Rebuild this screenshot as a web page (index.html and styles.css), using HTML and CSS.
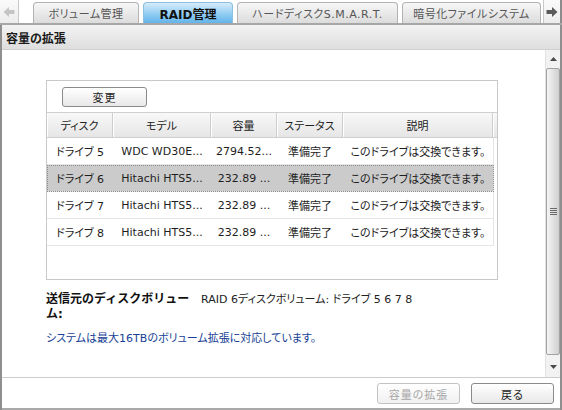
FILE: index.html
```html
<!DOCTYPE html>
<html lang="ja">
<head>
<meta charset="utf-8">
<title>容量の拡張</title>
<link rel="stylesheet" href="styles.css">
</head>
<body>
<div class="app">
  <div class="tabbar">
    <div class="nav nav-left">
      <svg width="12" height="10" viewBox="0 0 12 10"><path d="M0.5 5 L6 0 L6 3 L11.5 3 L11.5 7 L6 7 L6 10 Z" fill="#c4c4c4"/></svg>
    </div>
    <div class="tabs">
      <div class="tab t1">ボリューム管理</div>
      <div class="tab t2 active">RAID管理</div>
      <div class="tab t3">ハードディスクS.M.A.R.T.</div>
      <div class="tab t4">暗号化ファイルシステム</div>
    </div>
    <div class="nav nav-right">
      <svg width="12" height="10" viewBox="0 0 12 10"><path d="M11.5 5 L6 0 L6 3 L0.5 3 L0.5 7 L6 7 L6 10 Z" fill="#5a5a5a"/></svg>
    </div>
  </div>
  <div class="panel">
    <div class="title">容量の拡張</div>
    <div class="body">
      <div class="main">
        <div class="grid">
          <div class="toolbar"><button class="btn btn-change">変更</button></div>
          <div class="ghead">
            <div class="hc c1">ディスク</div>
            <div class="hc c2">モデル</div>
            <div class="hc c3">容量</div>
            <div class="hc c4">ステータス</div>
            <div class="hc c5">説明</div>
            <div class="hc c6"></div>
          </div>
          <div class="row">
            <div class="cell c1">ドライブ 5</div>
            <div class="cell c2">WDC WD30E...</div>
            <div class="cell c3">2794.52...</div>
            <div class="cell c4">準備完了</div>
            <div class="cell c5">このドライブは交換できます。</div>
          </div>
          <div class="row selected">
            <div class="cell c1">ドライブ 6</div>
            <div class="cell c2">Hitachi HTS5...</div>
            <div class="cell c3">232.89 ...</div>
            <div class="cell c4">準備完了</div>
            <div class="cell c5">このドライブは交換できます。</div>
          </div>
          <div class="row">
            <div class="cell c1">ドライブ 7</div>
            <div class="cell c2">Hitachi HTS5...</div>
            <div class="cell c3">232.89 ...</div>
            <div class="cell c4">準備完了</div>
            <div class="cell c5">このドライブは交換できます。</div>
          </div>
          <div class="row">
            <div class="cell c1">ドライブ 8</div>
            <div class="cell c2">Hitachi HTS5...</div>
            <div class="cell c3">232.89 ...</div>
            <div class="cell c4">準備完了</div>
            <div class="cell c5">このドライブは交換できます。</div>
          </div>
        </div>
        <div class="info">
          <div class="label">送信元のディスクボリューム:</div>
          <div class="value">RAID 6ディスクボリューム: ドライブ 5 6 7 8</div>
        </div>
        <div class="note">システムは最大16TBのボリューム拡張に対応しています。</div>
      </div>
      <div class="scrollbar">
        <div class="sb-btn"><svg width="7" height="4" viewBox="0 0 7 4"><path d="M0 4 L3.5 0 L7 4 Z" fill="#4a4a4a"/></svg></div>
        <div class="sb-thumb">
          <svg width="7" height="7" viewBox="0 0 7 7"><path d="M0 0.5 H7 M0 2.5 H7 M0 4.5 H7 M0 6.5 H7" stroke="#6a6a6a" stroke-width="1"/></svg>
        </div>
        <div class="sb-btn sb-down"><svg width="7" height="4" viewBox="0 0 7 4"><path d="M0 0 L3.5 4 L7 0 Z" fill="#4a4a4a"/></svg></div>
      </div>
    </div>
    <div class="footer">
      <button class="btn btn-foot" disabled>容量の拡張</button>
      <button class="btn btn-foot">戻る</button>
    </div>
  </div>
</div>
</body>
</html>
```

FILE: styles.css
```css
* { box-sizing: border-box; }
html, body { margin: 0; padding: 0; background: #ffffff; }
body {
  font-family: "DejaVu Sans", "Noto Sans CJK JP", sans-serif;
  font-size: 11px;
  color: #222;
  font-feature-settings: "palt";
}
.app { width: 562px; height: 410px; display: flex; flex-direction: column; }

.tabbar {
  height: 25px;
  display: flex;
  align-items: flex-end;
  border-bottom: 2px solid #a7a7a7;
  background: #ffffff;
}
.nav {
  height: 23px;
  display: flex;
  align-items: center;
  justify-content: center;
  background: linear-gradient(#fafafa, #ececec);
}
.nav-left { width: 19px; border-right: 1px solid #c8c8c8; }
.nav-right { width: 19px; margin-left: 2px; border-left: 1px solid #c8c8c8; border-right: 2px solid #8c8c8c; }
.tabs { display: flex; gap: 4px; margin-left: 14px; align-items: flex-end; }
.tab {
  height: 21px;
  border: 1px solid #b3b3b3;
  border-bottom: none;
  border-radius: 4px 4px 0 0;
  background: linear-gradient(#f7f7f7, #dcdcdc);
  color: #555;
  display: flex;
  align-items: center;
  justify-content: center;
  white-space: nowrap;
  font-size: 11px;
  letter-spacing: 0.5px;
}
.t1 { width: 106px; }
.t2 { width: 90px; }
.t3 { width: 161px; }
.t4 { width: 139px; }
.tab.active {
  background: linear-gradient(#d6ecfb, #8ccaf2 60%, #63b4ea);
  border-color: #8fbfe0;
  color: #111;
  font-weight: bold;
  font-size: 12px;
  letter-spacing: 0;
}

.panel {
  flex: 1;
  display: flex;
  flex-direction: column;
  border-left: 2px solid #8f8f8f;
  border-right: 2px solid #8f8f8f;
}
.title {
  height: 25px;
  border-bottom: 1px solid #cfcfcf;
  background: linear-gradient(#f3f3f3, #dedede);
  font-weight: bold;
  font-size: 12px;
  color: #1a1a1a;
  padding-left: 4px;
  display: flex;
  align-items: center;
}
.body { height: 327px; display: flex; }
.main { flex: 1; padding: 30px 0 0 44px; }

.grid {
  width: 452px;
  height: 200px;
  border: 1px solid #c9c9c9;
}
.toolbar {
  height: 32px;
  border-bottom: 1px solid #d0d0d0;
  padding: 6px 0 0 15px;
}
.btn {
  font-family: "DejaVu Sans", "Noto Sans CJK JP", sans-serif;
  font-feature-settings: "palt";
  font-size: 11px;
  color: #222;
  background: linear-gradient(#ffffff, #e8e8e8);
  border: 1px solid #8a8a8a;
  border-radius: 3px;
  padding: 0;
  letter-spacing: 1px;
}
.btn-change { width: 85px; height: 20px; }
.ghead {
  display: flex;
  height: 25px;
  border-bottom: 1px solid #d0d0d0;
  background: linear-gradient(#f8f8f8, #e6e6e6);
}
.hc {
  display: flex;
  align-items: center;
  justify-content: center;
  border-right: 1px solid #cdcdcd;
  box-shadow: inset 1px 0 0 #ffffff;
  color: #222;
}
.c1 { width: 66px; }
.c2 { width: 98px; }
.c3 { width: 66px; }
.c4 { width: 66px; }
.c5 { width: 150px; }
.hc.c6 { flex: 1; border-right: none; }
.row {
  display: flex;
  width: 447px;
  height: 27px;
  border-bottom: 1px solid #e6e6e6;
  border-right: 1px solid #e6e6e6;
}
.row.selected {
  background: #cbcbcb;
  outline: 1px dotted #8d8d8d;
  outline-offset: -1px;
}
.cell {
  display: flex;
  align-items: center;
  justify-content: center;
  white-space: nowrap;
  overflow: hidden;
  color: #1e1e1e;
  font-size: 11px;
}

.info { display: flex; margin-top: 12px; line-height: 15px; }
.label {
  width: 148px;
  margin-right: 7px;
  font-weight: bold;
  font-size: 12px;
  color: #111;
  font-feature-settings: normal;
}
.value { color: #222; }
.note { margin-top: 9px; color: #173f95; line-height: 15px; }

.scrollbar {
  width: 15px;
  display: flex;
  flex-direction: column;
  background: #f2f2f2;
  border-left: 1px solid #e2e2e2;
}
.sb-btn { height: 17px; display: flex; align-items: center; justify-content: center; }
.sb-thumb {
  flex: 1;
  margin: 1px 0 2px 0;
  border: 1px solid #a2a2a2;
  border-radius: 2px;
  background: linear-gradient(90deg, #f4f4f4, #e2e2e2 50%, #cfcfcf);
  display: flex;
  align-items: center;
  justify-content: center;
}
.sb-down { height: 20px; }

.footer {
  flex: 1;
  border-top: 1px solid #cccccc;
  border-bottom: 2px solid #a9a9a9;
  display: flex;
  justify-content: flex-end;
  align-items: flex-start;
  gap: 11px;
  padding: 5px 6px 0 0;
}
.btn-foot { width: 83px; height: 21px; }
.btn-foot:disabled { color: #a8a8a8; border-color: #c2c2c2; background: linear-gradient(#ffffff, #f0f0f0); }
```
